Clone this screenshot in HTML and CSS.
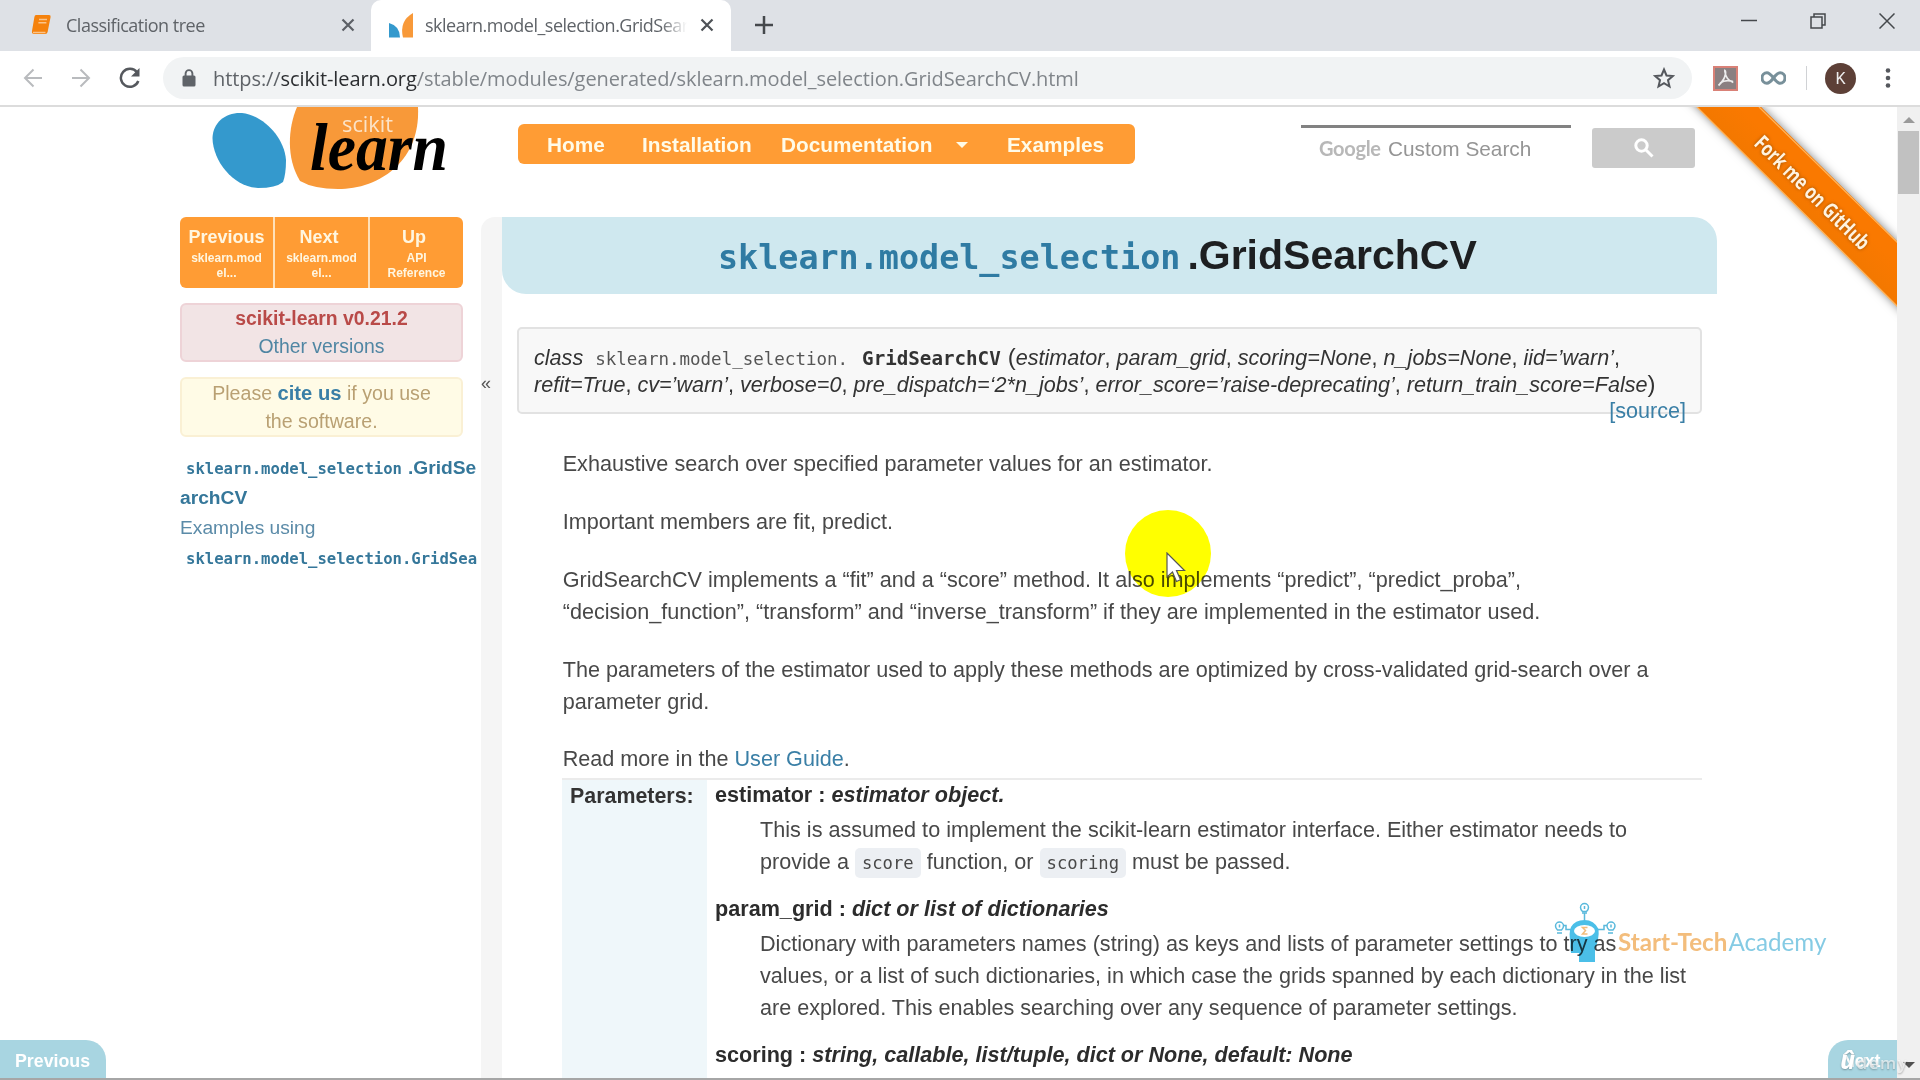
FILE: index.html
```html
<!DOCTYPE html>
<html lang="en">
<head>
<meta charset="utf-8">
<title>sklearn.model_selection.GridSearchCV</title>
<link rel="stylesheet" href="styles.css">
</head>
<body>
<div class="tabs">
  <div class="tab tab-idle">
    <svg class="fav" width="20" height="22" viewBox="0 0 20 22"><path d="M5 1h13q2 0 1.600 2l-3 15q-.4 2-2.400 2H3q-2.500 0-2-3L3.400 3Q3.700 1 5 1z" fill="#f5820d"/><path d="M2 18.500h12.500M8 5.500h8M7.400 8.800h8" stroke="#fbc48a" stroke-width="1.500"/></svg>
    <span class="tab-title t1">Classification tree</span>
    <svg class="close" width="14" height="14" viewBox="0 0 14 14"><path d="M1.500 1.500l11 11M12.500 1.500l-11 11" stroke="#5c6066" stroke-width="2.200"/></svg>
  </div>
  <div class="tab tab-active">
    <svg class="fav2" width="25" height="25" viewBox="0 0 25 25"><path d="M0 10Q11 13 11 24.500H0z" fill="#3499cd"/><path d="M24 0v24.500H14Q10 8 24 0z" fill="#f89939"/></svg>
    <span class="tab-title t2">sklearn.model_selection.GridSear</span>
    <svg class="close" width="14" height="14" viewBox="0 0 14 14"><path d="M1.500 1.500l11 11M12.500 1.500l-11 11" stroke="#4e5257" stroke-width="2.200"/></svg>
  </div>
  <svg class="plus" width="20" height="20" viewBox="0 0 20 20"><path d="M10 1v18M1 10h18" stroke="#45484c" stroke-width="2.500"/></svg>
  <div class="winbtns">
    <svg width="16" height="16" viewBox="0 0 16 16"><path d="M0 7.500h16" stroke="#45484c" stroke-width="1.500"/></svg>
    <svg width="16" height="16" viewBox="0 0 16 16" fill="none" stroke="#45484c" stroke-width="1.500"><path d="M1 4h11v11H1zM4 4V1h11v11h-3"/></svg>
    <svg width="16" height="16" viewBox="0 0 16 16"><path d="M.5.5l15 15M15.500.5l-15 15" stroke="#45484c" stroke-width="1.500"/></svg>
  </div>
</div>
<div class="toolbar">
  <svg class="nav-ic" width="20" height="20" viewBox="0 0 20 20" fill="none" stroke="#b9bbbe" stroke-width="2"><path d="M19 10H2M10.500 1.500L2 10l8.500 8.500"/></svg>
  <svg class="nav-ic" width="20" height="20" viewBox="0 0 20 20" fill="none" stroke="#b9bbbe" stroke-width="2"><path d="M1 10h17M9.500 1.500L18 10l-8.500 8.500"/></svg>
  <svg class="reload" width="22" height="22" viewBox="0 0 22 22"><path d="M18 5.300A9 9 0 1 0 19.300 14" fill="none" stroke="#55585d" stroke-width="2.500"/><path d="M20.500 1v8.500H12z" fill="#55585d"/></svg>
  <div class="omnibox">
    <svg class="lock" width="14" height="18" viewBox="0 0 14 18"><rect x=".5" y="6.500" width="13" height="11" rx="1.500" fill="#5f6368"/><path d="M3.600 7V4.500a3.400 3.400 0 0 1 6.800 0V7" fill="none" stroke="#5f6368" stroke-width="1.900"/></svg>
    <span class="url"><span>https://</span><b>scikit-learn.org</b>/stable/modules/generated/sklearn.model_selection.GridSearchCV.html</span>
    <svg class="star" width="22" height="22" viewBox="0 0 22 22"><path d="M11 2.500l2.500 6 6.300.5-4.800 4.200 1.500 6.300L11 16.200l-5.500 3.300L7 13.200 2.200 9l6.300-.5z" fill="none" stroke="#55585d" stroke-width="2"/></svg>
  </div>
  <svg class="pdf" width="25" height="25" viewBox="0 0 25 25"><rect x="1" y="1" width="23" height="23" fill="#8a8081" stroke="#d98177" stroke-width="2"/><path d="M11 4q2 0 1.500 4-1 6-7 11.500M11.800 5q1 9 8.500 11.500M7 17q6-4 13-1.500" fill="none" stroke="#eee" stroke-width="1.700"/></svg>
  <svg class="inf" width="25" height="14" viewBox="0 0 25 14"><path d="M12.500 7C9 2.500 7.500 1.800 5.900 1.800a4.900 5.200 0 0 0 0 10.400C8 12.200 9.500 11 12.500 7s4.500-5.200 6.600-5.200a4.900 5.200 0 0 1 0 10.400C17.500 12.200 16 11.500 12.500 7z" fill="none" stroke="#78909a" stroke-width="3"/></svg>
  <span class="sep"></span>
  <span class="avatar">K</span>
  <svg class="dots" width="6" height="20" viewBox="0 0 6 20" fill="#55585d"><circle cx="3" cy="2.500" r="2.300"/><circle cx="3" cy="10" r="2.300"/><circle cx="3" cy="17.500" r="2.300"/></svg>
</div>
<div class="page">
  <div class="view">
    <div class="head">
      <svg class="logo" width="250" height="90" viewBox="210 107 250 90">
        <path d="M242 113C262 115 284 136 286 160Q286 174 283 182Q276 188 258 188C234 187 213 162 212.500 138C213 122 226 112 242 113z" fill="#3499cd"/>
        <path d="M297 107H418C419 128 414 148 398 165C380 183 358 189 338 189Q314 189 300 181C286 158 288 128 297 107z" fill="#f89939"/>
        <text class="logo-s" x="342" y="131.500" textLength="51" lengthAdjust="spacingAndGlyphs">scikit</text>
        <text class="logo-l" x="310" y="170" textLength="138" lengthAdjust="spacingAndGlyphs">learn</text>
      </svg>
      <div class="menu"><a class="m1">Home</a><a class="m2">Installation</a><a class="m3">Documentation</a><i class="caret"></i><a class="m4">Examples</a></div>
      <div class="search"><span class="google">Google</span><span class="custom">Custom Search</span></div>
      <div class="sbtn"><svg width="20" height="20" viewBox="0 0 20 20"><circle cx="7.500" cy="7.500" r="5.700" fill="none" stroke="#fff" stroke-width="3"/><path d="M11.500 11.500l7 7" stroke="#fff" stroke-width="3"/></svg></div>
    </div>
    <div class="body">
      <div class="side">
        <div class="rel">
          <div><b>Previous</b><span>sklearn.mod<br>el...</span></div>
          <div class="off"><b>Next</b><span>sklearn.mod<br>el...</span></div>
          <div class="off"><b>Up</b><span>API<br>Reference</span></div>
        </div>
        <div class="ver"><b>scikit-learn v0.21.2</b><br><a>Other versions</a></div>
        <div class="cite">Please <a>cite us</a> if you use<br>the software.</div>
        <div class="toc">
          <div class="l1"><code>sklearn.model_selection</code><b>.GridSe</b></div>
          <div class="l2"><b>archCV</b></div>
          <div class="l3">Examples using</div>
          <div class="l4"><code>sklearn.model_selection.GridSearchCV</code></div>
        </div>
      </div>
      <div class="toggle">«</div>
      <div class="main">
        <h1><code>sklearn.model_selection</code><span>.GridSearchCV</span></h1>
        <div class="sig">
          <div class="s1"><em class="sc">class</em><code class="smod">sklearn.model_selection.</code><code class="sname">GridSearchCV</code><span class="par">(</span><span class="args"><em>estimator</em>, <em>param_grid</em>, <em>scoring=None</em>, <em>n_jobs=None</em>, <em>iid=’warn’</em>,</span></div>
          <div class="s2"><em>refit=True</em>, <em>cv=’warn’</em>, <em>verbose=0</em>, <em>pre_dispatch=‘2*n_jobs’</em>, <em>error_score=’raise-deprecating’</em>, <em>return_train_score=False</em><span class="par">)</span></div>
          <div class="src"><a>[source]</a></div>
        </div>
        <div class="text">
          <p>Exhaustive search over specified parameter values for an estimator.</p>
          <p>Important members are fit, predict.</p>
          <p>GridSearchCV implements a “fit” and a “score” method. It also implements “predict”, “predict_proba”,<br>“decision_function”, “transform” and “inverse_transform” if they are implemented in the estimator used.</p>
          <p>The parameters of the estimator used to apply these methods are optimized by cross-validated grid-search over a<br>parameter grid.</p>
          <p class="last">Read more in the <a>User Guide</a>.</p>
        </div>
        <div class="params">
          <div class="plabel">Parameters:</div>
          <dl>
            <dt>estimator : <em>estimator object.</em></dt>
            <dd>This is assumed to implement the scikit-learn estimator interface. Either estimator needs to<br>provide a <code>score</code> function, or <code>scoring</code> must be passed.</dd>
            <dt>param_grid : <em>dict or list of dictionaries</em></dt>
            <dd>Dictionary with parameters names (string) as keys and lists of parameter settings to try as<br>values, or a list of such dictionaries, in which case the grids spanned by each dictionary in the list<br>are explored. This enables searching over any sequence of parameter settings.</dd>
            <dt>scoring : <em>string, callable, list/tuple, dict or None, default: None</em></dt>
          </dl>
        </div>
      </div>
    </div>
    <svg class="ribbon" width="217" height="220" viewBox="1680 107 217 220">
      <defs><linearGradient id="g" x1="0" y1="1" x2="1" y2="0" ><stop offset=".4" stop-color="#ec7700"/><stop offset=".6" stop-color="#fa7900"/></linearGradient></defs>
      <path class="rb" d="M1686 96L1750 96L1907 251V316z" fill="url(#g)"/>
      <path d="M1697 107l203 202M1759 107l141 138" stroke="#ffb45c" stroke-width="1.300" fill="none"/>
      <text class="fork" transform="translate(1753 144.500) rotate(44.600)" textLength="152" lengthAdjust="spacingAndGlyphs">Fork me on GitHub</text>
    </svg>
    <a class="corner prev">Previous</a>
    <a class="corner next">Next</a>
  </div>
  <div class="scroll"><i class="up"></i><div class="thumb"></div><i class="down"></i></div>
</div>
<div class="halo"></div>
<svg class="cursor" width="21" height="32" viewBox="0 0 21 32"><path d="M1 1v24l5.500-5 4 9.500 4-1.700-4-9.300h8z" fill="#fff" stroke="#555" stroke-width="1.200"/></svg>
<div class="mark">
  <svg width="64" height="62" viewBox="1554 900 64 62" fill="none" stroke="#5ab9dc" stroke-width="1.500">
    <path d="M1571 952q-1-6-.5-11-2-9 .5-15 4-7 13.500-7t14 9q1 9-3.500 20v13h-16v-9z" fill="#4bbfe8" stroke="none"/>
    <ellipse cx="1584.500" cy="930" rx="10.500" ry="6" fill="#fff" stroke="none"/>
    <path d="M1587.500 926.500h-5l3 3-3 3.500h5" stroke="#f3bd7c"/>
    <path d="M1584.500 919v-7M1582 912h5M1571 928.500h-5v-4h-3M1598 928.500h6v-4h3M1557 932h5M1608 932h5"/>
    <path d="M1582.500 910.500q-2-2-2-4a4 4 0 0 1 8 0q0 2-2 4zM1557.500 929q-2-2-2-4a4 4 0 0 1 8 0q0 2-2 4zM1609 929q-2-2-2-4a4 4 0 0 1 8 0q0 2-2 4zM1584.500 905v3M1559.500 923.500v3M1611 923.500v3"/>
  </svg>
  <b>Start-Tech</b><span>Academy</span>
</div>
<div class="udemy"><i>û</i>demy</div>
</body>
</html>
```
FILE: styles.css
```css
*{box-sizing:border-box}
body{margin:0;width:1920px;height:1080px;overflow:hidden;background:#fff;position:relative;font-family:"Liberation Sans",Arial,sans-serif;font-size:20px;color:#484848;white-space:nowrap}
svg{display:block;flex:none}
h1,p,dl,dd,dt{margin:0}
a{color:#3a7fa6;text-decoration:none}
.tabs{height:51px;background:#dee1e6;display:flex;align-items:stretch}
.tab{display:flex;align-items:center;padding-bottom:1px;font-family:"Open Sans","Noto Sans",sans-serif;font-size:18px;color:#5f6368}
.tab-idle{width:371px;padding-left:31px}
.tab-title{overflow:hidden;display:block}
.t1{margin-left:15px;width:275px;letter-spacing:-.5px}
.tab-active{width:360px;background:#fff;border-radius:10px 10px 0 0;padding-left:18px}
.t2{margin-left:11px;width:262px;margin-right:13px;letter-spacing:-.5px;-webkit-mask-image:linear-gradient(90deg,#000 90%,transparent);mask-image:linear-gradient(90deg,#000 90%,transparent)}
.plus{margin:15px 0 0 23px}
.winbtns{margin:13px 25px 0 auto;display:flex;gap:53px}
.toolbar{height:56px;border-bottom:2px solid #dcdcdc;display:flex;align-items:center;padding-left:23px;background:#fff}
.nav-ic{margin-right:28px}
.reload{margin-right:22px}
.omnibox{width:1529px;height:42px;border-radius:21px;background:#f1f3f4;display:flex;align-items:center;padding-left:19px;margin-right:21px}
.url{margin-left:17px;font-family:"Open Sans","Noto Sans",sans-serif;font-size:20px;letter-spacing:-.08px;color:#80858a;flex:1}
.url span{color:#5f6368}
.url b{font-weight:400;color:#2b2d30}
.star{margin-right:17px}
.inf{margin-left:23px}
.sep{width:1px;height:24px;background:#d0d2d5;margin:0 18px 0 20px}
.avatar{width:31px;height:31px;border-radius:50%;background:#5d4037;color:#eee;font:16px/31px Roboto,sans-serif;text-align:center;margin-right:29px}
.page{height:973px;border-bottom:2px solid #a6a6a6;display:flex;overflow:hidden}
.view{width:1897px;height:971px;overflow:hidden;position:relative}
.head{height:110px;display:flex;padding-left:210px}
.logo-s{font:22px "Open Sans",sans-serif;fill:#fbe3c8}
.logo-l{font:italic bold 68px "Liberation Serif",serif;fill:#000}
.menu{margin:17px 0 0 58px;width:617px;height:40px;border-radius:6px;background:#ff9c34;display:flex;align-items:center;padding:1px 0 0 29px}
.menu a{color:#fffbe8;font-weight:700;font-size:20.800px;line-height:40px}
.m1{width:95px}.m2{width:139px}.m3{width:175px;padding-top:1px}.m4{margin-left:39px}
.caret{width:0;height:0;border:6px solid transparent;border-top-color:#fffbe8;border-bottom:0}
.search{margin:18px 0 0 166px;width:270px;height:44px;border-top:3px solid #828282;display:flex;padding:9px 0 0 18px;line-height:24px;color:#959595}
.google{font-family:Lato,sans-serif;color:#b8b8b8;font-weight:700;width:69px;letter-spacing:-.3px;line-height:22px}
.custom{font-size:20.800px}
.sbtn{margin:21px 0 0 21px;width:103px;height:40px;border-radius:3px;background:#cbcbcb;display:flex;align-items:center;justify-content:center}
.body{display:flex;height:861px;padding-left:180px}
.side{width:299px;margin-right:2px;overflow:hidden}
.rel{width:283px;height:71px;border-radius:6px;background:#ff9c34;display:flex;color:#fff6e0;overflow:hidden}
.rel div{flex:1;text-align:center;padding-top:9px}
.rel div+div{border-left:2px solid #ffe0b8}
.rel b{display:block;font-size:18px;line-height:22px}
.rel .off b{padding-right:5px}
.rel span{display:block;font-size:12px;line-height:15px;font-weight:700;padding-top:3px}
.ver,.cite{width:283px;border:2px solid #eed3d7;border-radius:6px;text-align:center;background:#f2e4e5}
.ver{margin-top:15px;height:59px;line-height:28px;font-size:19.400px}
.ver b,.ver a{position:relative;top:-1px}
.ver b{color:#b94a48}
.ver a{color:#5086a3}
.cite{margin-top:15px;height:60px;line-height:28px;font-size:19.600px;border-color:#faf0d4;background:#fffbe6;color:#b9a073}
.cite a{font-weight:700;font-size:20.200px}
.toc{margin-top:16px;color:#35779a;font-size:19.200px}
.toc div{line-height:30px}
.toc code{font:700 15.600px "DejaVu Sans Mono",monospace;margin-left:6px}
.l1 b{margin-left:6px}
.toc .l3{color:#5b8ba8}
.toggle{width:21px;background:#f5f5f5;border-radius:14px 0 0 0;padding:155px 0 0 0;color:#555;font-size:18px;line-height:22px}
.main{width:1215px}
h1{height:77px;background:#cfe8ef;border-radius:0 24px 0 24px;padding-left:216px;line-height:76px;font-size:41px;color:#1d1f21;display:flex;align-items:baseline}
h1 code{font:700 33.400px "DejaVu Sans Mono",monospace;color:#2f7ba3}
h1 span{margin-left:7px}
.sig{margin:33px 0 0 15px;width:1185px;height:87px;border:2px solid #e2e2e2;border-radius:5px;background:#f8f8f8;padding:15px 0 0 15px;color:#333;font-size:21.600px}
.s1,.s2{line-height:27px;height:27px;display:flex;align-items:baseline}
.s2{display:block}
.smod{font:17.500px "DejaVu Sans Mono",monospace;margin-left:12px;color:#555}
.sname{font:700 19.200px "DejaVu Sans Mono",monospace;margin-left:14px}
.par{font-size:24px;line-height:20px}
.s1 .par{margin-left:7px}
.src{text-align:right;padding-right:14px;line-height:26px}
.text{padding:34px 0 0 60.700px;font-size:21.610px}
.text p{line-height:32px;margin-bottom:26px}
.text p.last{margin-bottom:3px;margin-top:-1px}
.params{margin-left:60px;width:1140px;border-top:2px solid #ebebeb;display:flex;font-size:21.610px}
.plabel{width:145px;height:310px;background:#eff7fa;font-weight:700;color:#333;padding:1px 0 0 8px;line-height:30px;font-size:21.400px}
dl{padding-left:8px;margin-top:-1px}
dt{font-weight:700;color:#2c2c2c;line-height:32px}
dd{margin-left:45px;line-height:32px;padding:3px 0 15px}
dd code{font:17.200px "DejaVu Sans Mono",monospace;background:#eceff3;border-radius:5px;padding:5px 7px}
.ribbon{position:absolute;right:0;top:0}
.rb{filter:drop-shadow(0 0 5px rgba(0,0,0,.5))}
.fork{font:700 21px "Open Sans",sans-serif;fill:#fff3e0;text-shadow:0 0 4px #934c00}
.corner{position:absolute;bottom:0;height:38px;background:#a8d5e1;color:#fff;font-weight:700;font-size:17.800px;line-height:42px}
.prev{left:0;width:106px;border-top-right-radius:20px;padding-left:15px}
.next{right:0;width:69px;border-top-left-radius:20px;padding-left:14px}
.scroll{width:23px;background:#f0f0f0;display:flex;flex-direction:column;align-items:center}
.up,.down{width:0;height:0;border:6px solid transparent}
.up{border-bottom-color:#9a9a9a;border-top:0;margin:10px 0 8px}
.thumb{width:21px;height:63px;background:#c1c1c1}
.down{border-top-color:#505050;border-bottom:0;margin:auto 0 10px}
.halo{position:absolute;left:1125px;top:510px;width:86px;height:87px;border-radius:50%;background:#ff0;mix-blend-mode:multiply}
.cursor{position:absolute;left:1166px;top:552px}
.mark{position:absolute;left:1554px;top:901px;display:flex;font:24.200px/30px Lato,sans-serif;mix-blend-mode:multiply}
.mark b{color:#f3bd7c;margin:26px 0 0}
.mark span{color:#85cbe4;margin:26px 0 0 1px}
.udemy{position:absolute;left:1840px;top:1044px;font:600 17px/30px "Open Sans",sans-serif;letter-spacing:1.500px;color:rgba(255,255,255,.65);text-shadow:0 1px 2px rgba(0,0,0,.3)}
.udemy i{font-size:25px;font-weight:700;color:#fff}
```
